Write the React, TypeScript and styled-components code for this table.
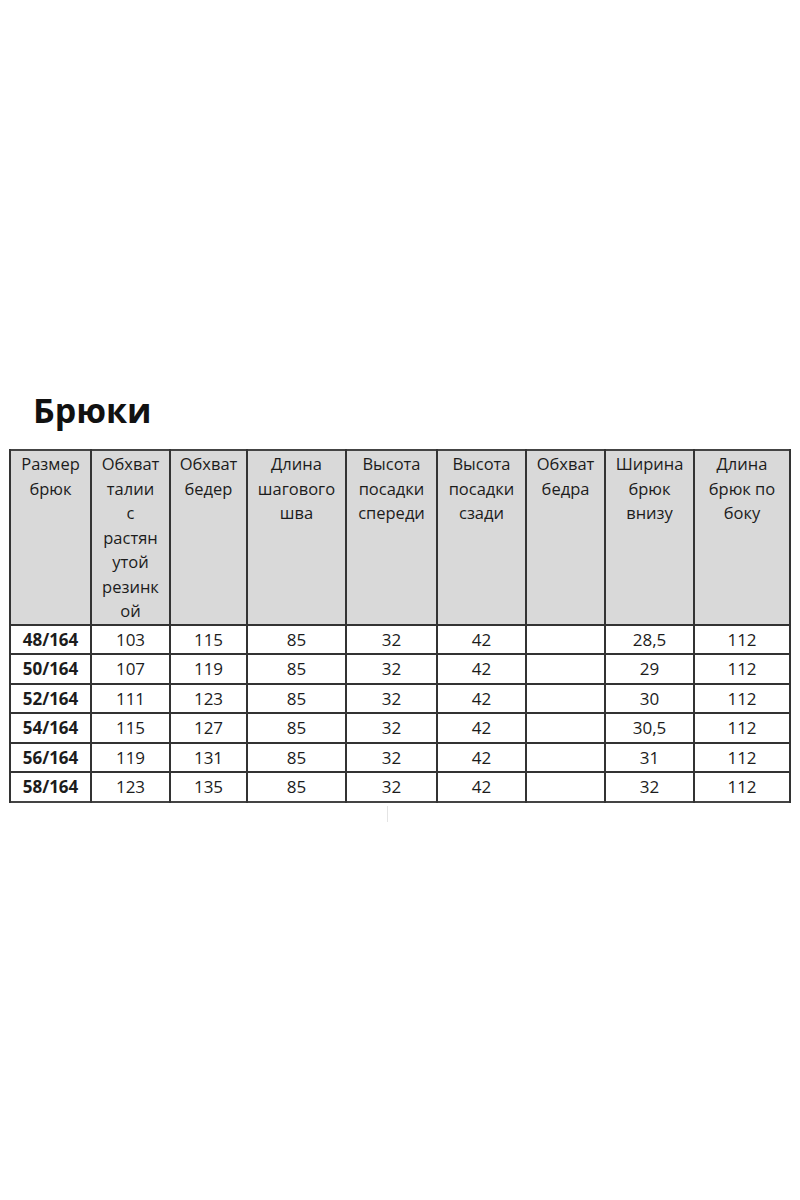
import React from "react";
import styled, { createGlobalStyle } from "styled-components";

const GlobalStyle = createGlobalStyle`
  html, body {
    margin: 0;
    padding: 0;
    background: #ffffff;
  }
  body {
    font-family: "Open Sans", "Noto Sans", sans-serif;
    color: #1a1a1a;
  }
`;

const Page = styled.div`
  width: 800px;
  height: 1200px;
  padding: 384px 0 0 9px;
  box-sizing: border-box;
`;

const Title = styled.h1`
  margin: 0 0 0 24px;
  height: 65px;
  font-size: 34px;
  line-height: 52px;
  font-weight: 700;
  color: #111;
`;

const Table = styled.table`
  border-collapse: collapse;
  table-layout: fixed;
  width: 780px;
  border: 2px solid #444;
`;

const HeadCell = styled.th`
  background: #d9d9d9;
  border: 1px solid #333;
  border-width: 1px 2px;
  height: 172px;
  padding: 1px 2px 0;
  vertical-align: top;
  text-align: center;
  font-weight: 400;
  font-size: 16.5px;
  line-height: 24.5px;
  color: #1c1c1c;
  box-sizing: border-box;
`;

const Cell = styled.td<{ $bold?: boolean }>`
  border: 1px solid #333;
  border-width: 2px 2px 1px;
  height: 29.5px;
  padding: 0;
  text-align: center;
  vertical-align: middle;
  font-size: 17px;
  font-weight: ${(p) => (p.$bold ? 700 : 400)};
  color: #1c1c1c;
  box-sizing: border-box;
`;

const Tick = styled.div`
  width: 1px;
  height: 16px;
  margin: 3px 0 0 378px;
  background: #e4e4e4;
`;

const widths = [81, 79, 77, 99, 91, 89, 79, 89, 96];

const headers: string[][] = [
  ["Размер", "брюк"],
  ["Обхват", "талии", "с", "растян", "утой", "резинк", "ой"],
  ["Обхват", "бедер"],
  ["Длина", "шагового", "шва"],
  ["Высота", "посадки", "спереди"],
  ["Высота", "посадки", "сзади"],
  ["Обхват", "бедра"],
  ["Ширина", "брюк", "внизу"],
  ["Длина", "брюк по", "боку"],
];

const rows: string[][] = [
  ["48/164", "103", "115", "85", "32", "42", "", "28,5", "112"],
  ["50/164", "107", "119", "85", "32", "42", "", "29", "112"],
  ["52/164", "111", "123", "85", "32", "42", "", "30", "112"],
  ["54/164", "115", "127", "85", "32", "42", "", "30,5", "112"],
  ["56/164", "119", "131", "85", "32", "42", "", "31", "112"],
  ["58/164", "123", "135", "85", "32", "42", "", "32", "112"],
];

export default function App() {
  return (
    <Page>
      <GlobalStyle />
      <Title>Брюки</Title>
      <Table>
        <colgroup>
          {widths.map((w, i) => (
            <col key={i} style={{ width: w }} />
          ))}
        </colgroup>
        <thead>
          <tr>
            {headers.map((lines, i) => (
              <HeadCell key={i}>
                {lines.map((l, j) => (
                  <React.Fragment key={j}>
                    {j > 0 && <br />}
                    {l}
                  </React.Fragment>
                ))}
              </HeadCell>
            ))}
          </tr>
        </thead>
        <tbody>
          {rows.map((r, i) => (
            <tr key={i}>
              {r.map((v, j) => (
                <Cell key={j} $bold={j === 0}>
                  {v}
                </Cell>
              ))}
            </tr>
          ))}
        </tbody>
      </Table>
      <Tick />
    </Page>
  );
}
